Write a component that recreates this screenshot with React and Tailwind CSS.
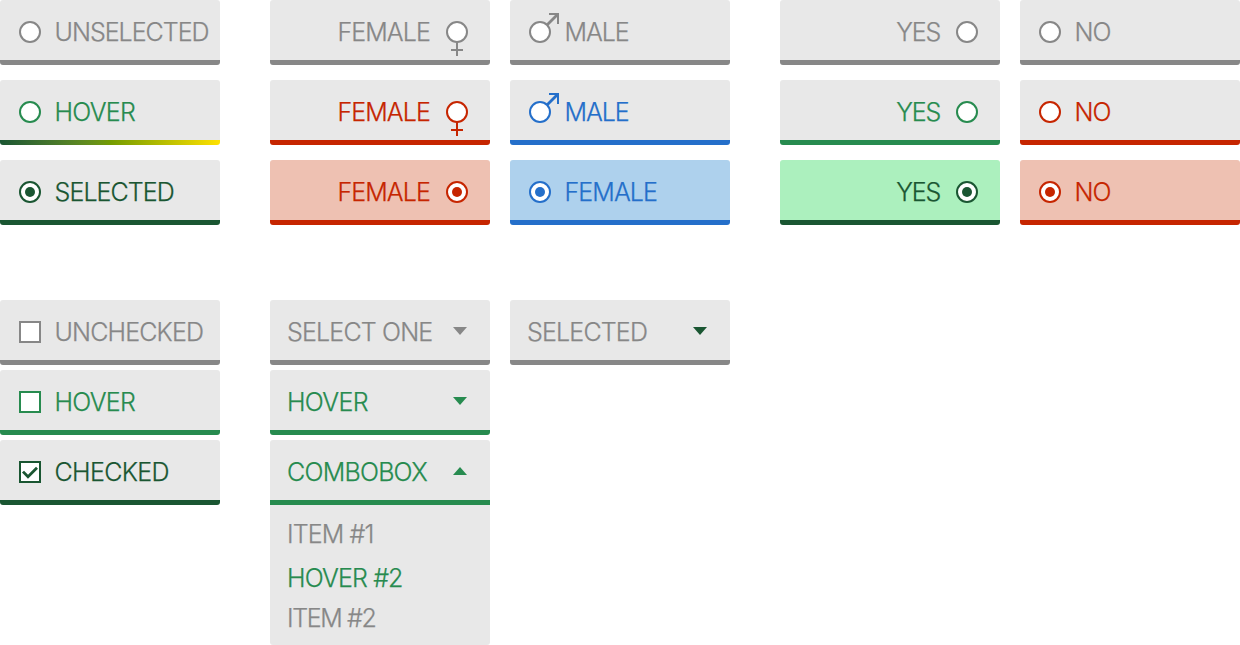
const tones = {
  gray: { text: "text-[#878787]", bar: "bg-[#878787]" },
  green: { text: "text-[#278b4f]", bar: "bg-[#278b4f]" },
  rainbow: { text: "text-[#278b4f]", bar: "bg-linear-to-r from-[#1a5632] via-[#739b00] to-[#ffe100]" },
  dark: { text: "text-[#1a5632]", bar: "bg-[#1a5632]" },
  red: { text: "text-[#c62500]", bar: "bg-[#c62500]" },
  blue: { text: "text-[#246fca]", bar: "bg-[#246fca]" },
};

function Radio({ selected, symbol }) {
  return (
    <svg width="22" height="22" viewBox="0 0 22 22" className="shrink-0 overflow-visible" fill="none" stroke="currentColor" strokeWidth="2">
      {symbol === "male" && (
        <>
          <path d="M18 4L29 -7" strokeWidth="2.8" />
          <path d="M20 -7H29V3" />
        </>
      )}
      {symbol === "female" && <path d="M11 21V35M5 29H17" />}
      <circle cx="11" cy="11" r="10" fill="#fff" />
      {selected && <circle cx="11" cy="11" r="5" fill="currentColor" stroke="none" />}
    </svg>
  );
}

function Checkbox({ checked }) {
  return (
    <svg width="22" height="22" viewBox="0 0 22 22" className="shrink-0" fill="none" stroke="currentColor" strokeWidth="2">
      <rect x="1" y="1" width="20" height="20" fill="#fff" />
      {checked && <path d="M4 10.6L9 15.8L18 6.7" strokeWidth="2.8" />}
    </svg>
  );
}

function Arrow({ up, className = "" }) {
  return (
    <svg width="14" height="8" viewBox="0 0 14 8" className={`-mt-0.5 shrink-0 ${className}`} fill="currentColor">
      <path d={up ? "M0 8H14L7 0Z" : "M0 0H14L7 8Z"} />
    </svg>
  );
}

function Tile({ tone, fill = "bg-[#e8e8e8]", layout, open, children }) {
  return (
    <div className={`flex h-[65px] w-[220px] flex-col ${tones[tone].text}`}>
      <div className={`flex h-[60px] items-center rounded-t-[3px] pt-1 whitespace-nowrap ${fill} ${layout}`}>{children}</div>
      <div className={`h-[5px] ${open ? "" : "rounded-b-[3px]"} ${tones[tone].bar}`} />
    </div>
  );
}

function Choice({ label, track = "tracking-[-0.9px]", end, tone, fill, selected, symbol }) {
  return (
    <Tile tone={tone} fill={fill} layout={end ? "flex-row-reverse gap-[16px] pr-[22px]" : "gap-[13.5px] pl-[19px]"}>
      <Radio selected={selected} symbol={symbol} />
      <span className={track}>{label}</span>
    </Tile>
  );
}

function Check({ label, track, tone, checked }) {
  return (
    <Tile tone={tone} layout="gap-[13.5px] pl-[19px]">
      <Checkbox checked={checked} />
      <span className={track}>{label}</span>
    </Tile>
  );
}

function Select({ label, track, tone, up, arrow }) {
  return (
    <Tile tone={tone} open={up} layout="justify-between pr-[23px] pl-[17px]">
      <span className={track}>{label}</span>
      <Arrow up={up} className={arrow} />
    </Tile>
  );
}

const pink = "bg-[#eec1b2]";

export default function App() {
  return (
    <main className="flex h-[645px] w-[1240px] flex-col justify-between bg-white font-['Inter',sans-serif] text-[25px] leading-9 font-light [-webkit-text-stroke:0.25px]">
      <section className="flex">
        <div className="flex flex-col gap-[15px]">
          <Choice label="UNSELECTED" tone="gray" track="tracking-[-1px]" />
          <Choice label="HOVER" tone="rainbow" track="tracking-[-0.7px]" />
          <Choice label="SELECTED" tone="dark" selected />
        </div>
        <div className="ml-[50px] flex flex-col gap-[15px]">
          <Choice end label="FEMALE" tone="gray" symbol="female" />
          <Choice end label="FEMALE" tone="red" symbol="female" />
          <Choice end label="FEMALE" tone="red" fill={pink} selected />
        </div>
        <div className="ml-5 flex flex-col gap-[15px]">
          <Choice label="MALE" tone="gray" symbol="male" track="tracking-[-1.1px]" />
          <Choice label="MALE" tone="blue" symbol="male" track="tracking-[-1.1px]" />
          <Choice label="FEMALE" tone="blue" fill="bg-[#aed1ed]" selected />
        </div>
        <div className="ml-[50px] flex flex-col gap-[15px]">
          <Choice end label="YES" tone="gray" track="tracking-[-1.2px]" />
          <Choice end label="YES" tone="green" track="tracking-[-1.2px]" />
          <Choice end label="YES" tone="dark" track="tracking-[-1.2px]" fill="bg-[#acf0be]" selected />
        </div>
        <div className="ml-5 flex flex-col gap-[15px]">
          <Choice label="NO" tone="gray" />
          <Choice label="NO" tone="red" />
          <Choice label="NO" tone="red" fill={pink} selected />
        </div>
      </section>
      <section className="flex items-start">
        <div className="flex flex-col gap-[5px]">
          <Check label="UNCHECKED" tone="gray" track="tracking-[-0.85px]" />
          <Check label="HOVER" tone="green" track="tracking-[-0.7px]" />
          <Check label="CHECKED" tone="dark" track="tracking-[-0.65px]" checked />
        </div>
        <div className="ml-[50px] flex flex-col gap-[5px]">
          <Select label="SELECT ONE" tone="gray" track="tracking-[-0.82px]" />
          <Select label="HOVER" tone="green" track="tracking-[-0.65px]" />
          <div>
            <Select label="COMBOBOX" tone="green" track="tracking-[-0.75px]" up />
            <ul className="h-[140px] rounded-b-[3px] bg-[#e8e8e8] pt-[7px] pl-[17px] text-[#878787]">
              <li className="h-11 leading-[44px] tracking-[-0.85px]">ITEM #1</li>
              <li className="h-11 leading-[44px] tracking-[-0.85px] text-[#278b4f]">HOVER #2</li>
              <li className="tracking-[-1.35px]">ITEM #2</li>
            </ul>
          </div>
        </div>
        <div className="ml-5">
          <Select label="SELECTED" tone="gray" track="tracking-[-0.82px]" arrow="text-[#1a5632]" />
        </div>
      </section>
    </main>
  );
}
